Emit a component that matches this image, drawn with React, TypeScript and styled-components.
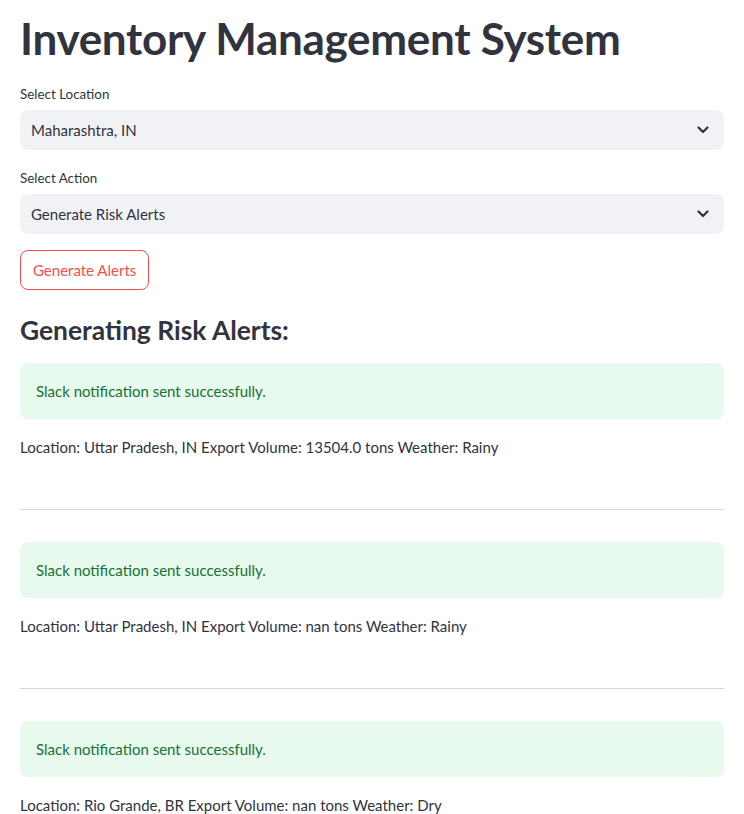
import * as React from 'react'
import styled, {createGlobalStyle} from 'styled-components'

const GlobalStyle = createGlobalStyle({
	'html, body': {
		margin: 0,
		padding: 0,
		background: '#ffffff',
	},
	'body': {
		fontFamily: 'Lato, "Noto Sans", sans-serif',
		color: '#31333f',
		WebkitFontSmoothing: 'antialiased',
	},
	'*': {
		boxSizing: 'border-box',
	},
})

const Main = styled('main')({
	width: '100%',
	padding: '0 20px 40px',
	display: 'flex',
	flexDirection: 'column',
	gap: '16px',
})

const Title = styled('h1')({
	margin: 0,
	padding: '12px 0 2px',
	fontSize: '44px',
	lineHeight: '52px',
	fontWeight: 700,
	letterSpacing: '-0.3px',
	color: '#31333f',
})

const Field = styled('div')({
	display: 'flex',
	flexDirection: 'column',
})

const Label = styled('label')({
	fontSize: '13.4px',
	lineHeight: '24px',
	marginBottom: '4px',
	color: '#31333f',
})

const SelectBox = styled('div')({
	height: '40px',
	borderRadius: '8px',
	background: '#f0f2f6',
	display: 'flex',
	alignItems: 'center',
	justifyContent: 'space-between',
	padding: '0 15px 0 11px',
	fontSize: '15px',
	color: '#31333f',
})

const Chevron = () => (
	<svg width="12" height="8" viewBox="0 0 12 8" fill="none">
		<path d="M1.5 1.5 L6 6 L10.5 1.5" stroke="#31333f" strokeWidth="2.2" strokeLinecap="round" strokeLinejoin="round" />
	</svg>
)

const Button = styled('button')({
	alignSelf: 'flex-start',
	height: '40px',
	padding: '0 12px',
	borderRadius: '8px',
	border: '1px solid #ff4b4b',
	background: '#ffffff',
	color: '#ff4b4b',
	fontFamily: 'inherit',
	fontSize: '15px',
	cursor: 'pointer',
})

const Heading = styled('h3')({
	margin: 0,
	padding: '8px 0 0',
	fontSize: '26.4px',
	lineHeight: '33px',
	fontWeight: 700,
	color: '#31333f',
})

const Alert = styled('div')({
	borderRadius: '8px',
	background: '#e8f9ee',
	color: '#177233',
	padding: '16px',
	fontSize: '15px',
	lineHeight: '24px',
})

const Text = styled('p')({
	margin: 0,
	fontSize: '15px',
	lineHeight: '24px',
	color: '#31333f',
})

const Divider = styled('hr')({
	margin: '34px 0 16px',
	border: 'none',
	borderTop: '1px solid #d6d6d9',
	height: 0,
})

type Result = {
	location: string,
	volume: string,
	weather: string,
}

const results: Result[] = [
	{location: 'Uttar Pradesh, IN', volume: '13504.0', weather: 'Rainy'},
	{location: 'Uttar Pradesh, IN', volume: 'nan', weather: 'Rainy'},
	{location: 'Rio Grande, BR', volume: 'nan', weather: 'Dry'},
]

const Select: React.FC<{label: string, value: string}> = ({label, value}) => (
	<Field>
		<Label>{label}</Label>
		<SelectBox>
			<span>{value}</span>
			<Chevron />
		</SelectBox>
	</Field>
)

export default function App() {
	return (
		<>
			<GlobalStyle />
			<Main>
				<Title>Inventory Management System</Title>
				<Select label="Select Location" value="Maharashtra, IN" />
				<Select label="Select Action" value="Generate Risk Alerts" />
				<Button>Generate Alerts</Button>
				<Heading>Generating Risk Alerts:</Heading>
				{results.map((r, i) => (
					<React.Fragment key={i}>
						{i > 0 && <Divider />}
						<Alert>Slack notification sent successfully.</Alert>
						<Text>
							Location: {r.location} Export Volume: {r.volume} tons Weather: {r.weather}
						</Text>
					</React.Fragment>
				))}
			</Main>
		</>
	)
}
